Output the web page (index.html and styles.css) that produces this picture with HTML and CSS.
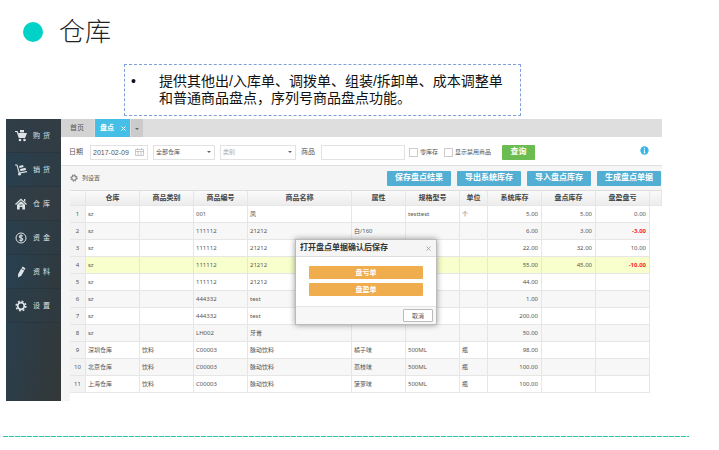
FILE: index.html
```html
<!DOCTYPE html>
<html lang="zh-CN">
<head>
  <meta charset="UTF-8">
  <title>仓库</title>
  <link rel="stylesheet" href="styles.css">
</head>
<body>

  <header class="title">
    <span class="dot"></span>
    <h1>仓库</h1>
  </header>

  <ul class="intro">
    <li>提供其他出/入库单、调拨单、组装/拆卸单、成本调整单<br>和普通商品盘点，序列号商品盘点功能。</li>
  </ul>

  <div class="app">
    <nav class="sidebar">
      <a href="#">
        <svg viewBox="0 0 12 12"><path d="M0 1.5h2.2l2 6h6" fill="none" stroke="#dde3e6" stroke-width="1.2"/><path d="M3 3h9l-1.5 4H4.2z"/><path d="M5 0h4v2.4H5z"/><circle cx="5" cy="10" r="1.3"/><circle cx="9.5" cy="10" r="1.3"/></svg>
        <span>购 货</span>
      </a>
      <a href="#">
        <svg viewBox="0 0 12 12"><path d="M0 1h2l2.2 8L12 7.6" fill="none" stroke="#dde3e6" stroke-width="1.1"/><path d="M4 2l4-1 .6 2-4 1zM5 5l5.500-1.200.6 2.200L5.500 7.200z"/><circle cx="4.500" cy="10.200" r="1.400"/></svg>
        <span>销 货</span>
      </a>
      <a href="#">
        <svg viewBox="0 0 12 12"><path d="M.5 6.500L6 1.300l5.500 5.200" fill="none" stroke="#dde3e6" stroke-width="1.300"/><path d="M2 6.800L6 3.200l4 3.600v4.700H7.300V9H4.700v2.500H2z"/><path d="M9 1h1.300v3L9 3z"/><path d="M4.500 7h3" stroke="#2f3d45" stroke-width=".8"/></svg>
        <span>仓 库</span>
      </a>
      <a href="#">
        <svg viewBox="0 0 12 12"><circle cx="6" cy="6" r="5" fill="none" stroke="#dde3e6" stroke-width="1"/><path d="M7.800 4.300C7 3.200 4.300 3.300 4.300 4.800S7.800 5.800 7.800 7.300 5 8.900 4.200 7.700M6 2.300v7.400" fill="none" stroke="#dde3e6" stroke-width="1.100"/></svg>
        <span>资 金</span>
      </a>
      <a href="#">
        <svg viewBox="0 0 12 12"><path d="M7.500.5l2.900 1.700-.7 1.700-3.200-1.700zM6.100 2.800l3.200 1.700-3 5.200L3 11.500l.1-3.600z"/></svg>
        <span>资 料</span>
      </a>
      <a href="#">
        <svg viewBox="0 0 12 12"><circle cx="6" cy="6" r="3.300" fill="none" stroke="#dde3e6" stroke-width="1.700"/><circle cx="6" cy="6" r="4.800" fill="none" stroke="#dde3e6" stroke-width="1.600" stroke-dasharray="1.900 1.870"/></svg>
        <span>设 置</span>
      </a>
    </nav>

    <main class="content">
      <div class="tabs">
        <a class="tab" href="#">首页</a>
        <a class="tab active" href="#">盘点 <svg viewBox="0 0 5 5"><path d="M.5.5l4 4M4.500.5l-4 4" stroke="#fff"/></svg></a>
        <button class="tab-more" aria-label="更多"><i class="caret"></i></button>
      </div>

      <form class="filter">
        <label for="date">日期</label>
        <span class="field date">
          <input id="date" type="text" value="2017-02-09">
          <svg viewBox="0 0 9 8"><path d="M.5 1.500h8v6h-8zM.5 3.500h8M2.500 0v2M6.500 0v2M3 3.500v4M6 3.500v4" fill="none" stroke="#bbb" stroke-width=".8"/></svg>
        </span>
        <span class="field store">
          <select aria-label="仓库"><option>全部仓库</option></select>
          <i class="caret"></i>
        </span>
        <span class="field kind">
          <select aria-label="类别"><option>类别</option></select>
          <i class="caret"></i>
        </span>
        <label for="goods">商品</label>
        <input id="goods" class="goods" type="text">
        <label class="check"><input type="checkbox">零库存</label>
        <label class="check"><input type="checkbox">显示禁用商品</label>
        <button class="search" type="button">查询</button>
        <svg class="info" viewBox="0 0 10 10"><circle cx="5" cy="5" r="4.600" fill="#35b5e8"/><path d="M5 2v1.300M5 4.200v3.600M4 4.500h1M4 7.600h2" stroke="#fff" stroke-width="1"/></svg>
      </form>

      <div class="toolbar">
        <a class="columns" href="#">
          <svg viewBox="0 0 8 8"><circle cx="4" cy="4" r="2.300" fill="none" stroke="#666" stroke-width="1"/><circle cx="4" cy="4" r="3.200" fill="none" stroke="#666" stroke-width="1" stroke-dasharray="1.200 1.313"/></svg>
          列设置
        </a>
        <button>保存盘点结果</button>
        <button>导出系统库存</button>
        <button>导入盘点库存</button>
        <button>生成盘点单据</button>
      </div>

      <div class="grid">
        <table>
          <colgroup>
            <col class="w-no"><col class="w"><col class="w"><col class="w"><col><col class="w"><col class="w"><col class="w-unit"><col class="w"><col class="w"><col class="w"><col class="w-end">
          </colgroup>
          <thead>
            <tr><th></th><th>仓库</th><th>商品类别</th><th>商品编号</th><th>商品名称</th><th>属性</th><th>规格型号</th><th>单位</th><th>系统库存</th><th>盘点库存</th><th>盘盈盘亏</th><th></th></tr>
          </thead>
          <tbody>
            <tr><th>1</th><td>sz</td><td></td><td>001</td><td>凤</td><td></td><td>testtest</td><td>个</td><td class="num">5.00</td><td class="num">5.00</td><td class="num">0.00</td></tr>
            <tr><th>2</th><td>sz</td><td></td><td>111112</td><td>21212</td><td>白/160</td><td></td><td></td><td class="num">6.00</td><td class="num">3.00</td><td class="num loss">-3.00</td></tr>
            <tr><th>3</th><td>sz</td><td></td><td>111112</td><td>21212</td><td></td><td></td><td></td><td class="num">22.00</td><td class="num">32.00</td><td class="num">10.00</td></tr>
            <tr class="selected"><th>4</th><td>sz</td><td></td><td>111112</td><td>21212</td><td></td><td></td><td></td><td class="num">55.00</td><td class="num">45.00</td><td class="num loss">-10.00</td></tr>
            <tr><th>5</th><td>sz</td><td></td><td>111112</td><td>21212</td><td></td><td></td><td></td><td class="num">44.00</td><td></td><td></td></tr>
            <tr><th>6</th><td>sz</td><td></td><td>444332</td><td>test</td><td></td><td></td><td></td><td class="num">1.00</td><td></td><td></td></tr>
            <tr><th>7</th><td>sz</td><td></td><td>444332</td><td>test</td><td></td><td></td><td></td><td class="num">200.00</td><td></td><td></td></tr>
            <tr><th>8</th><td>sz</td><td></td><td>LH002</td><td>牙膏</td><td></td><td></td><td></td><td class="num">50.00</td><td></td><td></td></tr>
            <tr><th>9</th><td>深圳仓库</td><td>饮料</td><td>C00003</td><td>脉动饮料</td><td>橘子味</td><td>500ML</td><td>瓶</td><td class="num">98.00</td><td></td><td></td></tr>
            <tr><th>10</th><td>北京仓库</td><td>饮料</td><td>C00003</td><td>脉动饮料</td><td>荔枝味</td><td>500ML</td><td>瓶</td><td class="num">100.00</td><td></td><td></td></tr>
            <tr><th>11</th><td>上海仓库</td><td>饮料</td><td>C00003</td><td>脉动饮料</td><td>菠萝味</td><td>500ML</td><td>瓶</td><td class="num">100.00</td><td></td><td></td></tr>
          </tbody>
        </table>
      </div>

      <div class="dialog" role="dialog" aria-labelledby="dialog-title">
        <div class="dialog-head">
          <h2 id="dialog-title">打开盘点单据确认后保存</h2>
          <button class="close" aria-label="关闭"><svg viewBox="0 0 5 5"><path d="M.5.5l4 4M4.500.5l-4 4" stroke="#999" stroke-width=".8"/></svg></button>
        </div>
        <div class="dialog-body">
          <button>盘亏单</button>
          <button>盘盈单</button>
        </div>
        <div class="dialog-foot">
          <button>取消</button>
        </div>
      </div>
    </main>
  </div>

  <div class="rule"></div>

</body>
</html>
```
FILE: styles.css
```css
* {
  box-sizing: border-box;
}
body {
  margin: 0;
  background: #fff;
  color: #555;
  font: 7px/10px "Liberation Sans", "Noto Sans CJK SC", sans-serif;
}
a {
  color: inherit;
  text-decoration: none;
}
button, input, select {
  font: inherit;
  color: inherit;
  margin: 0;
  padding: 0;
  border: 0;
  border-radius: 0;
  background: none;
}

.title {
  display: flex;
  align-items: center;
  gap: 16px;
  height: 64px;
  padding-left: 23px;
}
.dot {
  width: 20px;
  height: 20px;
  border-radius: 50%;
  background: #00d2c8;
}
h1 {
  margin: 0;
  color: #222;
  font-size: 26px;
  font-weight: 300;
  line-height: 30px;
}
.intro {
  margin: 0 198px 0 124px;
  padding: 8px 0 8px 34px;
  border: 1px dashed #7f9fd8;
  color: #111;
  font-size: 14px;
  line-height: 17px;
  list-style: none;
  white-space: nowrap;
}
.intro li::before {
  content: "•";
  float: left;
  width: 28px;
  margin-left: -28px;
}

.app {
  display: flex;
  margin: 3px 57px 0 6px;
}
.sidebar {
  flex: none;
  width: 55px;
  padding-bottom: 77px;
  background: linear-gradient(100deg, #24445a, #303a3f 75%, #333838);
}
.sidebar a {
  display: flex;
  align-items: center;
  gap: 6px;
  height: 34px;
  padding-left: 9px;
  border-bottom: 1px solid rgba(30, 40, 46, 0.3);
  color: #dde3e6;
}
.sidebar a:nth-child(odd) {
  background: rgba(52, 60, 65, 0.7);
}
.sidebar a:nth-child(even) {
  background: rgba(48, 60, 68, 0.4);
}
.sidebar a:nth-child(5) {
  background: none;
}
.sidebar svg {
  width: 12px;
  height: 12px;
  fill: #dde3e6;
}
.sidebar span {
  width: 17px;
  text-align-last: justify;
}

.content {
  position: relative;
  flex: 1;
  min-width: 0;
  background: #f5f5f5;
}
.tabs {
  display: flex;
  gap: 1px;
  height: 18px;
  background: #dedede;
}
.tab {
  width: 33px;
  padding-left: 9px;
  background: #d3d3d3;
  line-height: 18px;
}
.tab.active {
  display: flex;
  align-items: center;
  justify-content: space-between;
  width: 35px;
  padding: 0 4px 0 5px;
  background: #45bfe6;
  color: #fff;
  font-weight: bold;
}
.tab svg {
  width: 5px;
  height: 5px;
}
.tab-more {
  width: 12px;
  background: #cbcbcb;
}
.caret {
  display: inline-block;
  border: 2px solid transparent;
  border-top-color: #666;
  border-bottom: 0;
}

.filter {
  display: flex;
  align-items: center;
  height: 29px;
  padding: 2px 13px 0 8px;
  border-bottom: 1px solid #e0e0e0;
  background: #fff;
}
.field, .goods {
  height: 15px;
  border: 1px solid #e2e2e2;
  background: #fff;
}
.field {
  display: flex;
  align-items: center;
  padding: 0 3px 0 2px;
  margin-right: 5px;
  font-size: 6px;
}
.field input, .field select {
  flex: 1;
  min-width: 0;
  height: 13px;
  appearance: none;
  outline: 0;
}
.date {
  width: 58px;
  margin-left: 7px;
  font-size: 7px;
}
.date svg {
  width: 9px;
  height: 8px;
}
.store {
  width: 62px;
}
.kind {
  width: 76px;
  color: #aaa;
}
.goods {
  width: 84px;
  margin: 0 4px 0 6px;
}
.check {
  display: flex;
  align-items: center;
  gap: 2px;
  margin-right: 6px;
  font-size: 6px;
}
.check input {
  width: 9px;
  height: 9px;
  border: 1px solid #ccc;
  appearance: none;
}
.search {
  width: 33px;
  height: 15px;
  margin-left: 5px;
  border-radius: 1px;
  background: #6bbd52;
  color: #fff;
  font-size: 8px;
  font-weight: bold;
}
.info {
  width: 9px;
  height: 9px;
  margin: 0 0 3px auto;
}

.toolbar {
  display: flex;
  align-items: center;
  gap: 6px;
  height: 24px;
  padding-right: 1px;
}
.columns {
  display: flex;
  align-items: center;
  gap: 4px;
  margin: 0 auto 0 9px;
  font-size: 6px;
}
.columns svg {
  width: 8px;
  height: 8px;
}
.toolbar button {
  width: 64px;
  height: 15px;
  border-radius: 1px;
  background: #53aed3;
  color: #fff;
  font-size: 8px;
  font-weight: bold;
}

.grid {
  height: 211px;
  margin-left: 9px;
  background: #fff;
}
table {
  width: 100%;
  table-layout: fixed;
  border-collapse: separate;
  border-spacing: 0;
  font: 6px/8px "Noto Sans", "Noto Sans CJK SC", sans-serif;
}
.w {
  width: 54px;
}
.w-no {
  width: 16px;
}
.w-unit {
  width: 28px;
}
.w-end {
  width: 12px;
}
th, td {
  height: 17px;
  padding: 0 3px 0 2px;
  border-right: 1px solid #e6e6e6;
  border-bottom: 1px solid #e6e6e6;
  text-align: left;
  white-space: nowrap;
}
thead th {
  height: 16px;
  padding: 0;
  border-top: 1px solid #ddd;
  background: linear-gradient(#fafafa, #ececec);
  color: #444;
  font-size: 7px;
  text-align: center;
}
tbody th {
  padding: 0;
  background: #f3f3f3;
  font-weight: normal;
  text-align: center;
}
tbody tr:nth-child(even) td {
  background: #f7f7f7;
}
tbody tr.selected td {
  background: #f8ffcc;
}
.num {
  text-align: right;
}
td.loss {
  color: #f22;
  font-weight: bold;
}

.dialog {
  position: absolute;
  top: 120px;
  left: 234px;
  width: 142px;
  border: 1px solid #bbb;
  background: #fff;
  box-shadow: 0 0 6px rgba(0, 0, 0, 0.4);
}
.dialog-head {
  display: flex;
  align-items: center;
  justify-content: space-between;
  height: 17px;
  padding: 0 5px 0 4px;
  border-bottom: 1px solid #ddd;
  background: #f5f5f5;
}
h2 {
  margin: 0;
  color: #333;
  font-size: 8px;
  line-height: 12px;
}
.close {
  display: flex;
}
.close svg {
  width: 5px;
  height: 5px;
}
.dialog-body {
  display: grid;
  gap: 4px;
  padding: 9px 13px 10px;
}
.dialog-body button {
  height: 13px;
  border-radius: 1px;
  background: #f0ad4e;
  color: #fff;
  font-weight: bold;
}
.dialog-foot {
  display: flex;
  justify-content: flex-end;
  padding: 2px 3px;
  border-top: 1px solid #e5e5e5;
  background: #f7f7f7;
}
.dialog-foot button {
  width: 30px;
  height: 13px;
  border: 1px solid #bbb;
  border-radius: 1px;
  background: #fff;
  font-size: 6px;
}

.rule {
  height: 1px;
  margin: 35px 30px 0 3px;
  background: repeating-linear-gradient(90deg, #2bc4ac 0 5px, #c5efe8 5px 6px);
}
```
